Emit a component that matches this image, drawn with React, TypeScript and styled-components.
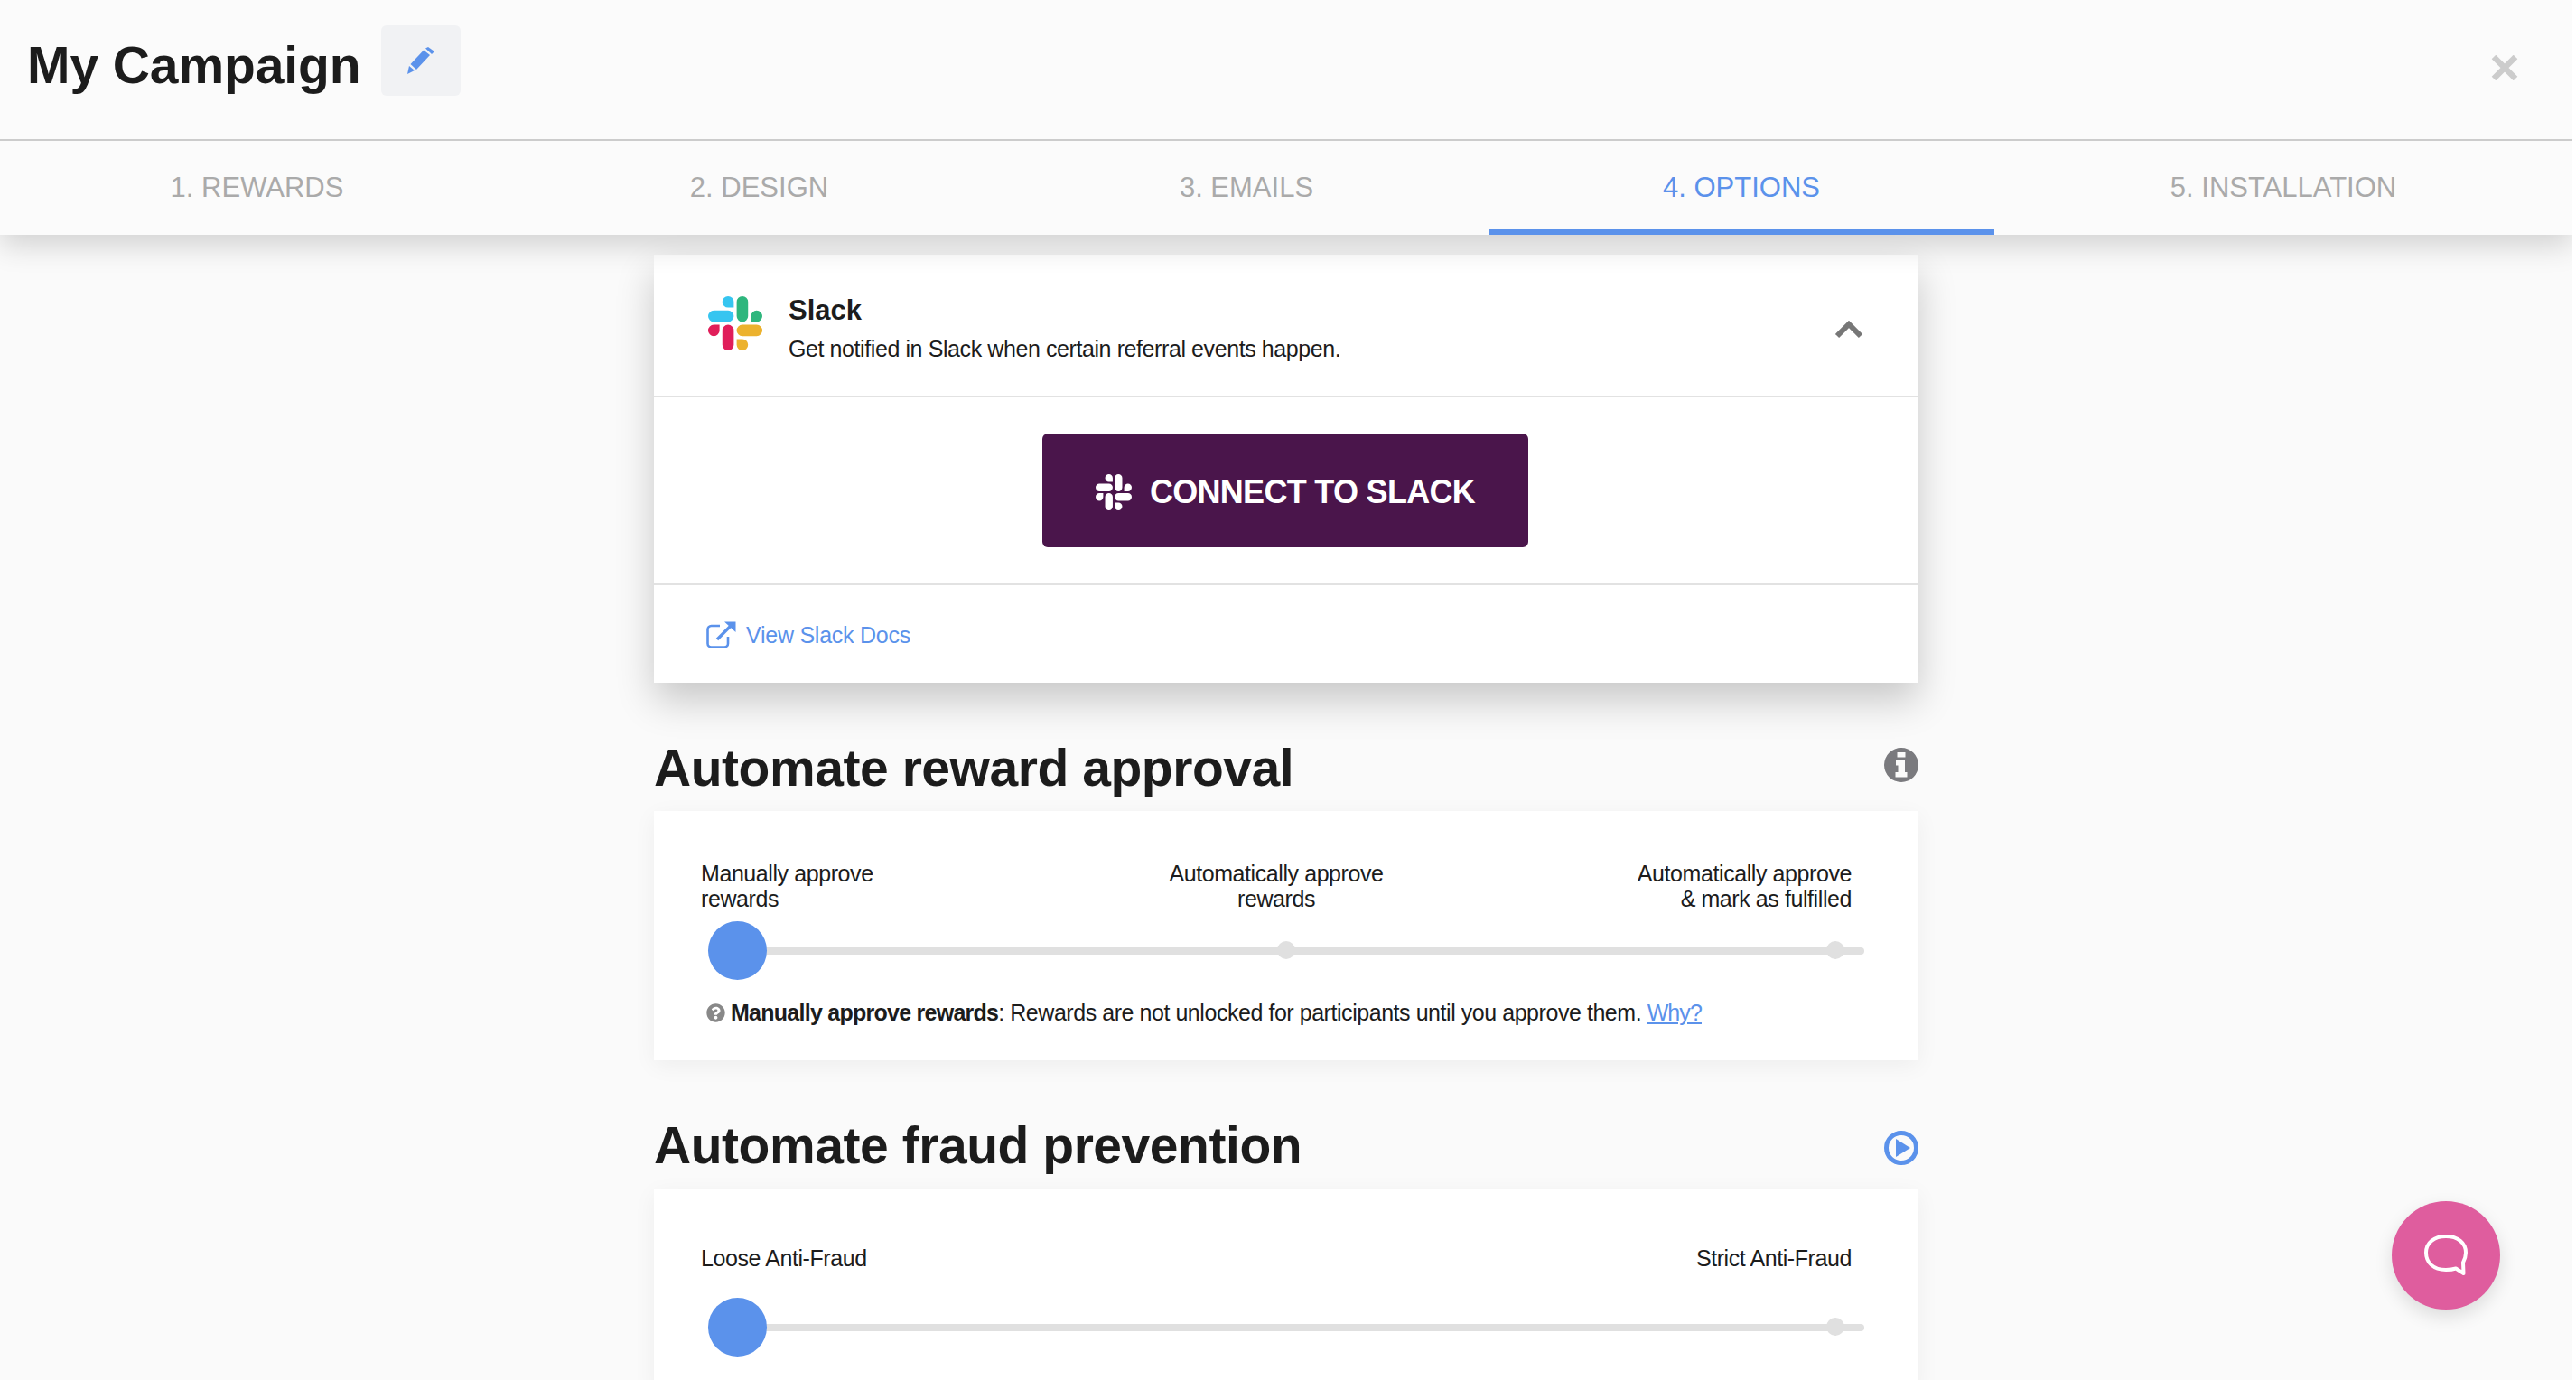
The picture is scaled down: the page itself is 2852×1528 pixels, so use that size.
import styled, {createGlobalStyle} from "styled-components";
import {FaQuestionCircle} from "react-icons/fa";

const GlobalStyle = createGlobalStyle`
  html, body {
    margin: 0;
    padding: 0;
    background: #ffffff;
    overflow: hidden;
  }
  * {
    box-sizing: border-box;
  }
`
const Page = styled.div`
  position: relative;
  width: 2848px;
  height: 1528px;
  overflow: hidden;
  background: #fafafa;
  color: #1c1c1c;
  font-family: "Liberation Sans", Arial, sans-serif;
`
const Header = styled.header`
  position: relative;
  z-index: 2;
  background: #fbfbfb;
  box-shadow: 0 12px 30px rgba(0, 0, 0, 0.16);
`
const TopBar = styled.div`
  height: 156px;
  border-bottom: 2px solid #cccccc;
  padding: 28px 60px 0 30px;
  display: flex;
  align-items: flex-start;
`
const CampaignName = styled.h1`
  margin: 0;
  height: 78px;
  line-height: 88px;
  font-size: 57px;
  font-weight: 700;
  letter-spacing: -0.1px;
`
const EditButton = styled.div`
  width: 88px;
  height: 78px;
  margin-left: 23px;
  background: #f1f2f4;
  border-radius: 6px;
  display: flex;
  align-items: center;
  justify-content: center;
`
const CloseButton = styled.div`
  margin-left: auto;
  margin-top: 33px;
  height: 28px;
  line-height: 0;
`
const Tabs = styled.nav`
  display: grid;
  grid-template-columns: 569fr 543fr 536fr 560fr 640fr;
  height: 104px;
`
const Tab = styled.div<{ $active?: boolean }>`
  display: flex;
  align-items: center;
  justify-content: center;
  font-size: 31px;
  color: ${props => props.$active ? "#5b92eb" : "#aaaaaa"};
  border-bottom: 6px solid ${props => props.$active ? "#5b92eb" : "transparent"};
  padding-top: 5px;
`
const Content = styled.main`
  width: 1400px;
  margin: 0 auto;
  padding-top: 22px;
`
const SlackCard = styled.section`
  background: #ffffff;
  height: 474px;
  box-shadow: 0 20px 40px rgba(0, 0, 0, 0.2);
`
const SlackHead = styled.div`
  height: 158px;
  border-bottom: 2px solid #e2e2e2;
  padding: 46px 61px 0 60px;
  display: flex;
  align-items: flex-start;
`
const SlackTitles = styled.div`
  margin: -3px 0 0 29px;
`
const SlackTitle = styled.div`
  font-size: 31px;
  font-weight: 700;
  line-height: 38px;
`
const SlackText = styled.div`
  font-size: 25px;
  line-height: 30px;
  margin-top: 8px;
  letter-spacing: -0.41px;
`
const Chevron = styled.div`
  margin-left: auto;
  margin-top: 27px;
  line-height: 0;
`
const SlackBody = styled.div`
  height: 208px;
  border-bottom: 2px solid #e2e2e2;
  display: flex;
  justify-content: center;
  padding: 40px 2px 0 0;
`
const ConnectButton = styled.div`
  width: 538px;
  height: 126px;
  background: #4a154b;
  border-radius: 6px;
  color: #ffffff;
  font-size: 36px;
  font-weight: 700;
  letter-spacing: -0.7px;
  padding-top: 3px;
  display: flex;
  align-items: center;
  justify-content: center;
  gap: 20px;
`
const SlackFooter = styled.div`
  height: 108px;
  padding: 2px 58px 0;
  display: flex;
  align-items: center;
  gap: 11px;
  color: #5b92eb;
  font-size: 25px;
  letter-spacing: -0.25px;
`
const SectionHead = styled.div`
  margin: 62px 0 16px;
  height: 64px;
  display: flex;
  align-items: center;
  justify-content: space-between;
`
const SectionTitle = styled.h2`
  margin: 0;
  font-size: 57px;
  font-weight: 700;
  letter-spacing: -0.45px;
`
const SectionIcon = styled.div<{ $up?: boolean }>`
  line-height: 0;
  margin: ${props => props.$up ? "0 0 6px" : "6px 0 0"};
`
const Card = styled.section`
  background: #ffffff;
  padding: 55px 74px 39px 52px;
  box-shadow: 0 6px 24px rgba(0, 0, 0, 0.05);
`
const Labels = styled.div<{ $single?: boolean }>`
  display: grid;
  grid-template-columns: repeat(3, 1fr);
  font-size: 25px;
  line-height: 28px;
  letter-spacing: -0.42px;
  padding-top: ${props => props.$single ? "8px" : "0"};
`
const Label = styled.div<{ $align: string; $column: number }>`
  grid-column: ${props => props.$column};
  text-align: ${props => props.$align};
`
const Slider = styled.div<{ $single?: boolean }>`
  position: relative;
  height: 65px;
  margin: ${props => props.$single ? "30px" : "11px"} -14px 0 8px;
  display: flex;
  align-items: center;
`
const Track = styled.div`
  width: 100%;
  height: 8px;
  border-radius: 4px;
  background: #e0e0e0;
`
const Dot = styled.div<{ $left: number }>`
  position: absolute;
  top: 22px;
  left: ${props => props.$left}px;
  width: 20px;
  height: 20px;
  border-radius: 50%;
  background: #e0e0e0;
`
const Thumb = styled.div`
  position: absolute;
  top: 0;
  left: 0;
  width: 65px;
  height: 65px;
  border-radius: 50%;
  background: #5b92eb;
`
const Help = styled.div`
  margin: 22px 0 0 6px;
  font-size: 25px;
  line-height: 28px;
  white-space: nowrap;
  letter-spacing: -0.45px;
  display: flex;
  align-items: center;
  gap: 6px;

  b {
    font-weight: 700;
    letter-spacing: -0.74px;
  }
  a {
    color: #5b92eb;
    text-decoration: underline;
    letter-spacing: -0.9px;
  }
`
const ChatButton = styled.div`
  position: absolute;
  z-index: 3;
  left: 2648px;
  top: 1330px;
  width: 120px;
  height: 120px;
  border-radius: 50%;
  background: #df5d9e;
  box-shadow: 0 8px 20px rgba(0, 0, 0, 0.12);
  display: flex;
  align-items: center;
  justify-content: center;
`

const tabs = ["1. REWARDS", "2. DESIGN", "3. EMAILS", "4. OPTIONS", "5. INSTALLATION"];

const slackParts = [
    {
        color: "#e01e5a",
        d: "M5.042 15.165a2.528 2.528 0 0 1-2.52 2.523A2.528 2.528 0 0 1 0 15.165a2.527 2.527 0 0 1 2.522-2.52h2.52v2.52zM6.313 15.165a2.527 2.527 0 0 1 2.521-2.52 2.527 2.527 0 0 1 2.521 2.52v6.313A2.528 2.528 0 0 1 8.834 24a2.528 2.528 0 0 1-2.521-2.522v-6.313z",
    },
    {
        color: "#36c5f0",
        d: "M8.834 5.042a2.528 2.528 0 0 1-2.521-2.52A2.528 2.528 0 0 1 8.834 0a2.528 2.528 0 0 1 2.521 2.522v2.52H8.834zM8.834 6.313a2.528 2.528 0 0 1 2.521 2.521 2.528 2.528 0 0 1-2.521 2.521H2.522A2.528 2.528 0 0 1 0 8.834a2.528 2.528 0 0 1 2.522-2.521h6.312z",
    },
    {
        color: "#2eb67d",
        d: "M18.956 8.834a2.528 2.528 0 0 1 2.522-2.521A2.528 2.528 0 0 1 24 8.834a2.528 2.528 0 0 1-2.522 2.521h-2.522V8.834zM17.688 8.834a2.528 2.528 0 0 1-2.523 2.521 2.527 2.527 0 0 1-2.52-2.521V2.522A2.527 2.527 0 0 1 15.165 0a2.528 2.528 0 0 1 2.523 2.522v6.312z",
    },
    {
        color: "#ecb22e",
        d: "M15.165 18.956a2.528 2.528 0 0 1 2.523 2.522A2.528 2.528 0 0 1 15.165 24a2.527 2.527 0 0 1-2.52-2.522v-2.522h2.52zM15.165 17.688a2.527 2.527 0 0 1-2.52-2.523 2.526 2.526 0 0 1 2.52-2.52h6.313A2.527 2.527 0 0 1 24 15.165a2.528 2.528 0 0 1-2.522 2.523h-6.313z",
    },
];

function SlackLogo({size, mono}: { size: number; mono?: string }) {
    return (
        <svg width={size} height={size} viewBox="0 0 24 24" style={{flexShrink: 0}}>
            {slackParts.map(part => <path key={part.color} d={part.d} fill={mono ?? part.color}/>)}
        </svg>
    )
}

function PencilIcon() {
    return (
        <svg width="30" height="30" viewBox="0 0 30 30" fill="#5b92eb">
            <polygon points="0,30 2,21 8,26"/>
            <polygon points="3.5,19 18,3.5 25,9 10,25"/>
            <polygon points="20,1.5 23,0 30,5 27,8"/>
        </svg>
    )
}

function CloseIcon() {
    return (
        <svg width="30" height="28" viewBox="0 0 30 28">
            <path d="M3 2 L27 26 M27 2 L3 26" stroke="#cccccc" strokeWidth="6.5" fill="none"/>
        </svg>
    )
}

function ChevronIcon() {
    return (
        <svg width="32" height="20" viewBox="0 0 32 20">
            <path d="M3 17 L16 4 L29 17" stroke="#777777" strokeWidth="6" fill="none"/>
        </svg>
    )
}

function ExternalIcon() {
    return (
        <svg width="33" height="30" viewBox="0 0 33 30" fill="none" stroke="#5b92eb" strokeWidth="2.6">
            <path d="M15 5 H5.5 A4 4 0 0 0 1.5 9 V24.5 A4 4 0 0 0 5.5 28.5 H20 A4 4 0 0 0 24 24.5 V17"/>
            <path d="M12 20 L28 4" strokeWidth="3.4"/>
            <polygon points="20,0.5 32.5,0.5 32.5,12" fill="#5b92eb" stroke="none"/>
        </svg>
    )
}

function InfoIcon() {
    return (
        <svg width="38" height="38" viewBox="0 0 38 38">
            <path
                fill="#7a7a7e"
                fillRule="evenodd"
                d="M19 0a19 19 0 1 0 0 38a19 19 0 1 0 0-38zM14.5 5h9v5.5h-9zM13 14h10v13h2.5v5.5h-13V27h3V19.5h-2.5z"
            />
        </svg>
    )
}

function PlayIcon() {
    return (
        <svg width="38" height="38" viewBox="0 0 38 38">
            <circle cx="19" cy="19" r="16.5" fill="none" stroke="#5b92eb" strokeWidth="5"/>
            <polygon points="13,9 29,19 13,29" fill="#5b92eb"/>
        </svg>
    )
}

function ChatIcon() {
    return (
        <svg width="50" height="46" viewBox="0 0 50 46" fill="none" stroke="#ffffff" strokeWidth="4" strokeLinejoin="round">
            <path d="M25 2 C38 2 47 9 47 20 C47 25 45.5 28 44 31 L44.5 43 L36 37.5 C33 38.5 29.5 39 25 39 C11 39 3 31 3 20 C3 9 12 2 25 2 Z"/>
        </svg>
    )
}

function App() {
    return (
        <Page>
            <GlobalStyle/>
            <Header>
                <TopBar>
                    <CampaignName>My Campaign</CampaignName>
                    <EditButton><PencilIcon/></EditButton>
                    <CloseButton><CloseIcon/></CloseButton>
                </TopBar>
                <Tabs>
                    {tabs.map(tab => <Tab key={tab} $active={tab === "4. OPTIONS"}>{tab}</Tab>)}
                </Tabs>
            </Header>
            <Content>
                <SlackCard>
                    <SlackHead>
                        <SlackLogo size={60}/>
                        <SlackTitles>
                            <SlackTitle>Slack</SlackTitle>
                            <SlackText>Get notified in Slack when certain referral events happen.</SlackText>
                        </SlackTitles>
                        <Chevron><ChevronIcon/></Chevron>
                    </SlackHead>
                    <SlackBody>
                        <ConnectButton>
                            <SlackLogo size={40} mono="#ffffff"/>
                            CONNECT TO SLACK
                        </ConnectButton>
                    </SlackBody>
                    <SlackFooter>
                        <ExternalIcon/>
                        View Slack Docs
                    </SlackFooter>
                </SlackCard>

                <SectionHead>
                    <SectionTitle>Automate reward approval</SectionTitle>
                    <SectionIcon $up><InfoIcon/></SectionIcon>
                </SectionHead>
                <Card>
                    <Labels>
                        <Label $align="left" $column={1}>Manually approve<br/>rewards</Label>
                        <Label $align="center" $column={2}>Automatically approve<br/>rewards</Label>
                        <Label $align="right" $column={3}>Automatically approve<br/>&amp; mark as fulfilled</Label>
                    </Labels>
                    <Slider>
                        <Track/>
                        <Dot $left={630}/>
                        <Dot $left={1238}/>
                        <Thumb/>
                    </Slider>
                    <Help>
                        <FaQuestionCircle size={21} color="#888888"/>
                        <span><b>Manually approve rewards</b>: Rewards are not unlocked for participants until you approve them. <a>Why?</a></span>
                    </Help>
                </Card>

                <SectionHead>
                    <SectionTitle>Automate fraud prevention</SectionTitle>
                    <SectionIcon><PlayIcon/></SectionIcon>
                </SectionHead>
                <Card>
                    <Labels $single>
                        <Label $align="left" $column={1}>Loose Anti-Fraud</Label>
                        <Label $align="right" $column={3}>Strict Anti-Fraud</Label>
                    </Labels>
                    <Slider $single>
                        <Track/>
                        <Dot $left={1238}/>
                        <Thumb/>
                    </Slider>
                </Card>
            </Content>
            <ChatButton><ChatIcon/></ChatButton>
        </Page>
    )
}

export default App
